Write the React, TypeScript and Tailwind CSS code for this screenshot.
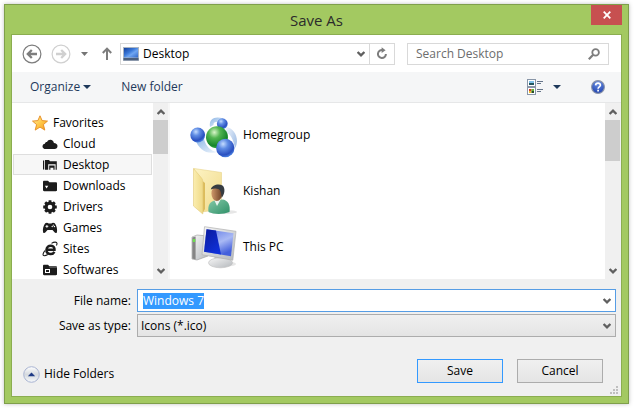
import { useEffect, useRef, type ReactNode } from "react";

function Chevron({ up = false, className = "" }: { up?: boolean; className?: string }) {
  return (
    <svg width="8" height="6" viewBox="0 0 8 6" className={className} aria-hidden="true">
      <path
        d={up ? "M0.6 5 L4 1.7 L7.4 5" : "M0.6 1 L4 4.3 L7.4 1"}
        fill="none"
        stroke="#606060"
        strokeWidth="2.4"
      />
    </svg>
  );
}

function NavCircle({ forward = false }: { forward?: boolean }) {
  return (
    <svg width="20" height="20" viewBox="0 0 20 20" fill="none" stroke={forward ? "#d0d0d0" : "#7d7d7d"} aria-hidden="true">
      <circle cx="10" cy="10" r="8.9" strokeWidth="1.2" />
      <path
        d={forward ? "M5 10H14M10.2 6L14.2 10L10.2 14" : "M15 10H6M9.8 6L5.8 10L9.8 14"}
        strokeWidth="2.3"
      />
    </svg>
  );
}

function Caret({ color, wide = false }: { color: string; wide?: boolean }) {
  return (
    <svg width={wide ? 8 : 7} height="4" viewBox="0 0 8 4" preserveAspectRatio="none" aria-hidden="true">
      <path d="M0 0H8L4 4Z" fill={color} />
    </svg>
  );
}

function MonitorIcon() {
  return (
    <svg width="16" height="14" viewBox="0 0 16 14" aria-hidden="true">
      <defs>
        <linearGradient id="mon" x1="0" y1="0" x2="1" y2="1">
          <stop offset="0" stopColor="#123f9b" />
          <stop offset="0.4" stopColor="#3a78d8" />
          <stop offset="0.6" stopColor="#6fa6f2" />
          <stop offset="1" stopColor="#2f66c8" />
        </linearGradient>
      </defs>
      <rect width="16" height="14" fill="#a9b4c2" />
      <rect x="1" y="1" width="14" height="9.5" fill="url(#mon)" />
      <rect x="0.5" y="11" width="15" height="2.3" fill="#4b5f7c" />
    </svg>
  );
}

function StarIcon() {
  return (
    <svg width="16" height="16" viewBox="0 0 16 16" aria-hidden="true">
      <defs>
        <linearGradient id="star" x1="0" y1="0" x2="1" y2="1">
          <stop offset="0" stopColor="#fff3b0" />
          <stop offset="0.5" stopColor="#ffc94a" />
          <stop offset="1" stopColor="#f59a1c" />
        </linearGradient>
      </defs>
      <path
        d="M8 0.8L10.1 5.6L15.5 6.1L11.4 9.6L12.8 15.1L8 12.1L3.2 15.1L4.6 9.6L0.5 6.1L5.9 5.6Z"
        fill="url(#star)"
        stroke="#e58a1f"
        strokeWidth="0.9"
        strokeLinejoin="round"
      />
    </svg>
  );
}

function DarkIcon({ children }: { children: ReactNode }) {
  return (
    <svg width="16" height="16" viewBox="0 0 16 16" fill="#1c1c1c" aria-hidden="true">
      {children}
    </svg>
  );
}

const cloud = (
  <DarkIcon>
    <path d="M3.8 13C1.7 13 0.5 11.9 0.5 10.4C0.5 9 1.5 8 2.9 7.8C3 6.6 4 5.9 5 6C5.7 4.5 6.8 3.7 8.3 3.7C10.3 3.7 11.7 5 11.9 6.9C14 6.9 15.5 8.2 15.5 10C15.5 11.8 14.3 13 12.5 13Z" />
  </DarkIcon>
);
const desktop = (
  <DarkIcon>
    <path d="M1 3.5H2.2V12.5H1ZM3 3H7L8 4.2H14.8V12.8H13.6V7.2H6.2V12.8H3Z" />
    <path d="M7.2 8.6H12.6V12.8H11.4V10.8H8.4V12.8H7.2Z" />
  </DarkIcon>
);
const downloads = (
  <DarkIcon>
    <path d="M1 4C1 3.2 1.4 2.8 2.2 2.8H6L7.4 4.2H13.8C14.6 4.2 15 4.6 15 5.4V12C15 12.8 14.6 13.2 13.8 13.2H2.2C1.4 13.2 1 12.8 1 12Z" />
    <path d="M2.9 7.8H6.3L4.6 10.6Z" fill="#fff" />
  </DarkIcon>
);
const drivers = (
  <DarkIcon>
    <path d="M8 1.2V14.8M1.2 8H14.8M3.2 3.2L12.8 12.8M12.8 3.2L3.2 12.8" stroke="#1c1c1c" strokeWidth="2.8" />
    <circle cx="8" cy="8" r="5.5" />
    <circle cx="8" cy="8" r="2.3" fill="#fff" />
  </DarkIcon>
);
const games = (
  <DarkIcon>
    <path d="M3.2 3.2C4.4 2.3 6 2.6 6.6 3.4H9.4C10 2.6 11.6 2.3 12.8 3.2C14.6 5.2 15.6 9.6 14.9 12.2C14.5 13.5 13.2 13.3 12.5 12.3L10.5 9.9H5.5L3.5 12.3C2.8 13.3 1.5 13.5 1.1 12.2C0.4 9.6 1.4 5.2 3.2 3.2Z" />
    <path d="M3.5 6.4H6.3M4.9 5V7.8" stroke="#fff" strokeWidth="0.9" />
    <circle cx="10.2" cy="6.5" r="0.7" fill="#fff" />
    <circle cx="12.4" cy="6.5" r="0.7" fill="#fff" />
    <circle cx="11.3" cy="5.2" r="0.6" fill="#fff" />
  </DarkIcon>
);
const sites = (
  <DarkIcon>
    <path d="M12.4 10.8C11.5 12.4 10 13.2 8.2 13C5.7 12.7 4.3 10.9 4.5 8.6C4.7 6.1 6.6 4.5 9 4.7C11.4 4.9 12.7 6.5 12.5 8.8H5.5" fill="none" stroke="#1c1c1c" strokeWidth="2.5" />
    <path d="M9.5 2.4C12 0.8 14.8 0.7 15 2.3C15.1 3 14.8 3.7 14.4 4.4M3 9.5C1 12 0.5 14.1 1.7 14.6C2.7 15 4.4 14.3 5.8 13.5" fill="none" stroke="#1c1c1c" strokeWidth="1.1" />
  </DarkIcon>
);
const softwares = (
  <DarkIcon>
    <path d="M1 4C1 3.2 1.4 2.8 2.2 2.8H6L7.4 4.2H13.8C14.6 4.2 15 4.6 15 5.4V12C15 12.8 14.6 13.2 13.8 13.2H2.2C1.4 13.2 1 12.8 1 12Z" />
    <path d="M7.4 5.5H15" stroke="#777" strokeWidth="0.6" />
    <rect x="3.5" y="7.5" width="4" height="3" fill="none" stroke="#fff" strokeWidth="1" />
  </DarkIcon>
);

function HomegroupIcon() {
  return (
    <svg width="48" height="48" viewBox="0 0 48 48" aria-hidden="true">
      <defs>
        <radialGradient id="blue" cx="0.38" cy="0.28" r="0.75">
          <stop offset="0" stopColor="#c4dcff" />
          <stop offset="0.35" stopColor="#5f8ce4" />
          <stop offset="0.8" stopColor="#2a50c0" />
          <stop offset="1" stopColor="#4e86e4" />
        </radialGradient>
        <radialGradient id="green" cx="0.38" cy="0.28" r="0.75">
          <stop offset="0" stopColor="#d8f5c8" />
          <stop offset="0.35" stopColor="#52b551" />
          <stop offset="0.8" stopColor="#17862c" />
          <stop offset="1" stopColor="#3cae46" />
        </radialGradient>
        <linearGradient id="trail" x1="0" y1="0" x2="1" y2="1">
          <stop offset="0" stopColor="#8db6e6" />
          <stop offset="1" stopColor="#eef5fc" />
        </linearGradient>
        <linearGradient id="trail2" x1="0" y1="0" x2="1" y2="0.6">
          <stop offset="0" stopColor="#f4f8fd" />
          <stop offset="1" stopColor="#a9c4e8" />
        </linearGradient>
      </defs>
      <path d="M5 28C9 39 17 44 27 41C21 40 16 36 14 28Z" fill="url(#trail)" />
      <path d="M36 16C45 17 50 29 45 37C43 28 41 23 35 21Z" fill="url(#trail2)" />
      <path d="M33 7.5C26 5 18.5 7 20 16L23.5 14C23 10.5 28 10 33 12Z" fill="url(#trail)" />
      <circle cx="32.3" cy="12.7" r="5.4" fill="url(#blue)" />
      <circle cx="7.7" cy="24" r="7.4" fill="url(#blue)" />
      <circle cx="27" cy="26.2" r="11" fill="url(#green)" />
      <circle cx="35.3" cy="37" r="9.2" fill="url(#blue)" />
    </svg>
  );
}

function UserFolderIcon() {
  return (
    <svg width="48" height="48" viewBox="0 0 48 48" aria-hidden="true">
      <defs>
        <linearGradient id="fold" x1="0" y1="0" x2="1" y2="0">
          <stop offset="0" stopColor="#fbeeb0" />
          <stop offset="1" stopColor="#efd986" />
        </linearGradient>
        <linearGradient id="back" x1="0" y1="0" x2="1" y2="1">
          <stop offset="0" stopColor="#fdf3c4" />
          <stop offset="1" stopColor="#f0da8a" />
        </linearGradient>
        <linearGradient id="shirt" x1="0" y1="0" x2="1" y2="1">
          <stop offset="0" stopColor="#84c9a8" />
          <stop offset="1" stopColor="#2f9068" />
        </linearGradient>
        <linearGradient id="face" x1="0" y1="0" x2="1" y2="0">
          <stop offset="0" stopColor="#d0986a" />
          <stop offset="1" stopColor="#6b3f25" />
        </linearGradient>
      </defs>
      <ellipse cx="33" cy="45" rx="14" ry="2" fill="#e6e6e6" />
      <path d="M4 1.5L31.5 5.5V42L12 45Z" fill="url(#back)" stroke="#e8d48a" strokeWidth="0.6" />
      <path d="M12.5 14L15 16V42L12.5 46Z" fill="#dcbc5c" />
      <path d="M3.5 1.5L11.5 11C12.5 12.3 12.8 13.5 12.8 15V47L3.5 39Z" fill="url(#fold)" stroke="#e3ca78" strokeWidth="0.6" />
      <path d="M18.5 45C17.5 38 20 34.5 25 33.5L33 32.5C38 33.5 40.5 38 39.5 45C33 47.6 24 47.6 18.5 45Z" fill="url(#shirt)" />
      <path d="M24 32.5L27 39L31.5 31Z" fill="#eaf3ee" />
      <ellipse cx="26.8" cy="26.5" rx="5.4" ry="7.4" fill="url(#face)" />
      <path d="M20.8 22.5C22 17.5 29 16.5 32.5 18.5C35.5 21 35 27 31.5 31C31.5 27 31 24 29 22.3C26 21 23.5 21.3 20.8 22.5Z" fill="#363c42" />
    </svg>
  );
}

function ComputerIcon() {
  return (
    <svg width="48" height="48" viewBox="0 0 48 48" aria-hidden="true">
      <defs>
        <linearGradient id="screenDark" x1="0" y1="0" x2="0.6" y2="1">
          <stop offset="0" stopColor="#0a1a9c" />
          <stop offset="1" stopColor="#1030d8" />
        </linearGradient>
        <linearGradient id="screenLight" x1="0" y1="0" x2="0.5" y2="1">
          <stop offset="0" stopColor="#5a74e4" />
          <stop offset="0.6" stopColor="#a9b9f4" />
          <stop offset="1" stopColor="#4460dc" />
        </linearGradient>
        <linearGradient id="metal" x1="0" y1="0" x2="1" y2="1">
          <stop offset="0" stopColor="#f7f7f7" />
          <stop offset="1" stopColor="#b4b8bc" />
        </linearGradient>
      </defs>
      <path d="M2 14L7 12L18 13V33L7 37L2 36Z" fill="url(#metal)" stroke="#9b9b9b" strokeWidth="0.6" />
      <path d="M2.3 14.4L5.6 13.6V36.4L2.3 35.6Z" fill="#858585" />
      <rect x="2.8" y="16" width="2.4" height="3" fill="#6be04c" />
      <ellipse cx="37" cy="41" rx="9" ry="2.5" fill="#e6e6e6" />
      <path d="M24 33L34 35L35 40H26Z" fill="#c3c6c9" />
      <ellipse cx="30.5" cy="39.8" rx="12" ry="5" fill="url(#metal)" stroke="#bdbdbd" strokeWidth="0.6" />
      <path d="M14.5 3.7L46 8.3L42.8 37.2L12 31.7Z" fill="url(#metal)" stroke="#b0b0b0" strokeWidth="0.7" />
      <path d="M16.5 6.2L43.5 10.2L41 33.2L14 28.8Z" fill="url(#screenLight)" />
      <path d="M16.5 6.2L26 7.6L31 31.6L14 28.8Z" fill="url(#screenDark)" />
    </svg>
  );
}

function ViewIcon() {
  return (
    <svg width="17" height="16" viewBox="0 0 17 16" aria-hidden="true">
      <rect x="0.5" y="0.5" width="8" height="7" fill="#fff" stroke="#8996a8" />
      <rect x="2" y="2" width="5" height="2" fill="#7fc1e8" />
      <rect x="2" y="4" width="5" height="2" fill="#23565e" />
      <rect x="0.5" y="8.5" width="8" height="7" fill="#fff" stroke="#8996a8" />
      <rect x="2" y="10" width="2.5" height="2" fill="#d83b2a" />
      <rect x="4.5" y="10" width="2.5" height="2" fill="#62b531" />
      <rect x="2" y="12" width="2.5" height="2" fill="#edc02d" />
      <rect x="4.5" y="12" width="2.5" height="2" fill="#254f2c" />
      <path d="M10 2.5H16M10 4.5H14M10 10.5H16M10 12.5H14" stroke="#66758a" />
    </svg>
  );
}

function HelpIcon() {
  return (
    <svg width="14" height="14" viewBox="0 0 14 14" aria-hidden="true">
      <defs>
        <radialGradient id="help" cx="0.5" cy="0.2" r="0.9">
          <stop offset="0" stopColor="#6e94e6" />
          <stop offset="1" stopColor="#1538a8" />
        </radialGradient>
      </defs>
      <circle cx="7" cy="7" r="6.4" fill="url(#help)" stroke="#8b94a8" strokeWidth="1.1" />
      <path d="M4.6 5.4C4.7 2.5 9.6 2.5 9.4 5.3C9.3 6.9 7.1 6.8 7.1 8.7M7.1 9.7V11.4" fill="none" stroke="#fff" strokeWidth="1.7" />
    </svg>
  );
}

const favorites = [
  { name: "Cloud", icon: cloud },
  { name: "Desktop", icon: desktop, selected: true },
  { name: "Downloads", icon: downloads },
  { name: "Drivers", icon: drivers },
  { name: "Games", icon: games },
  { name: "Sites", icon: sites },
  { name: "Softwares", icon: softwares },
];

const files = [
  { name: "Homegroup", icon: <HomegroupIcon /> },
  { name: "Kishan", icon: <UserFolderIcon /> },
  { name: "This PC", icon: <ComputerIcon /> },
];

function ScrollBar({ label, tall = false }: { label: string; tall?: boolean }) {
  return (
    <div className="flex w-[15px] shrink-0 flex-col bg-[#f0f0f0]">
      <button type="button" aria-label={`Scroll ${label} up`} className="flex h-[17px] items-center justify-center">
        <Chevron up />
      </button>
      <div className={tall ? "h-[41px] bg-[#cdcdcd]" : "h-[34px] bg-[#cdcdcd]"} />
      <button type="button" aria-label={`Scroll ${label} down`} className="mt-auto flex h-[17px] items-center justify-center">
        <Chevron />
      </button>
    </div>
  );
}

export default function App() {
  const nameRef = useRef<HTMLInputElement>(null);

  useEffect(() => {
    nameRef.current?.focus();
    nameRef.current?.select();
  }, []);

  return (
    <main className="bg-white py-1 pr-[5px] pl-1 font-['Open_Sans',sans-serif] text-xs text-black">
      <div className="border border-[#7f9f4b] bg-[#a3c961] px-1.5 pb-1.5 shadow-[0_0_4px_rgba(0,0,0,0.25)]">
        <header className="relative flex h-[29px] items-center justify-center">
          <h1 className="text-[15px] text-[#2b2b2b]">Save As</h1>
          <button
            type="button"
            aria-label="Close"
            className="absolute top-0 right-0 flex h-5 w-[31px] items-center justify-center bg-[#c75050]"
          >
            <svg width="8" height="8" viewBox="0 0 8 8" aria-hidden="true">
              <path d="M0.7 0.7L7.3 7.3M7.3 0.7L0.7 7.3" stroke="#fff" strokeWidth="1.8" />
            </svg>
          </button>
        </header>

        <div className="border border-[#8bad50] bg-white">
          <nav className="flex h-[37px] items-center pr-3 pl-[10px]">
            <button type="button" aria-label="Back"><NavCircle /></button>
            <button type="button" aria-label="Forward" className="ml-[9px]"><NavCircle forward /></button>
            <button type="button" aria-label="Recent locations" className="ml-[10px] flex h-5 items-center">
              <Caret color="#757575" />
            </button>
            <button type="button" aria-label="Up" className="ml-[14px] flex h-5 items-center">
              <svg width="10" height="13" viewBox="0 0 10 13" fill="none" stroke="#7d7d7d" strokeWidth="2" aria-hidden="true">
                <path d="M5 13V1.5M0.8 6L5 1.6L9.2 6" />
              </svg>
            </button>
            <div className="ml-2 flex h-[22px] flex-1 items-stretch border border-[#d9d9d9]">
              <button type="button" className="flex flex-1 items-center gap-1 pr-1 pl-0.5">
                <MonitorIcon />
                <span>Desktop</span>
                <Chevron className="ml-auto" />
              </button>
              <button type="button" aria-label="Refresh" className="flex w-[25px] items-center justify-center border-l border-[#d9d9d9]">
                <svg width="12" height="13" viewBox="0 0 12 13" aria-hidden="true">
                  <path d="M7 3.2A4 4 0 1 0 9.9 7" fill="none" stroke="#7d7d7d" strokeWidth="2" />
                  <path d="M5.6 0.2L9.6 3.2L5.6 6Z" fill="#7d7d7d" />
                </svg>
              </button>
            </div>
            <div className="ml-3 flex h-[22px] w-[202px] items-center border border-[#d9d9d9] px-2">
              <input
                type="search"
                aria-label="Search Desktop"
                placeholder="Search Desktop"
                className="min-w-0 flex-1 outline-none placeholder:text-[#6d6d6d]"
              />
              <svg width="12" height="12" viewBox="0 0 12 12" fill="none" stroke="#7d7d7d" aria-hidden="true">
                <circle cx="7.6" cy="4.4" r="3.3" strokeWidth="1.8" />
                <path d="M5.2 6.8L0.8 11.2" strokeWidth="2.2" />
              </svg>
            </div>
          </nav>

          <div className="flex h-[31px] items-center border-b border-[#e6e7e8] bg-[#f5f6f7] pr-4 pl-[18px] text-[#1e395b]">
            <button type="button" className="flex items-center gap-[3px]">
              Organize
              <Caret color="#1e395b" wide />
            </button>
            <button type="button" className="ml-[30px]">New folder</button>
            <button type="button" aria-label="Change view" className="ml-auto"><ViewIcon /></button>
            <button type="button" aria-label="More views" className="ml-[9px] flex h-5 items-center">
              <Caret color="#1e395b" wide />
            </button>
            <button type="button" aria-label="Help" className="ml-[30px]"><HelpIcon /></button>
          </div>

          <div className="flex h-44">
            <aside className="flex w-[156px] shrink-0">
              <div className="min-w-0 flex-1 overflow-hidden pt-[9px] pr-px pl-px">
                <div className="flex h-[21px] items-center gap-[5px] pl-[19px]">
                  <StarIcon />
                  Favorites
                </div>
                <ul>
                  {favorites.map((f) => (
                    <li
                      key={f.name}
                      className={
                        f.selected
                          ? "flex h-[21px] items-center gap-[5px] border border-[#dedede] bg-[#f7f7f7] pl-[28px]"
                          : "flex h-[21px] items-center gap-[5px] border border-transparent pl-[28px]"
                      }
                    >
                      {f.icon}
                      {f.name}
                    </li>
                  ))}
                </ul>
              </div>
              <ScrollBar label="folders" />
            </aside>
            <ul className="min-w-0 flex-1 border-l-2 border-[#f7f7f7] pt-1 pl-[20px]">
              {files.map((f) => (
                <li key={f.name} className="flex h-14 items-center gap-[5px]">
                  {f.icon}
                  {f.name}
                </li>
              ))}
            </ul>
            <ScrollBar label="files" tall />
            <div className="w-px bg-[#f0f0f0]" />
          </div>

          <form className="bg-[#f0f0f0] pt-2.5" onSubmit={(e) => e.preventDefault()}>
            <div className="grid grid-cols-[119px_1fr] items-center gap-x-1.5 gap-y-0.5 pr-[5px]">
              <label htmlFor="file-name" className="text-right">File name:</label>
              <div className="flex h-[23px] items-center border border-[#569de5] bg-white pr-1 pl-[5px]">
                <input
                  id="file-name"
                  ref={nameRef}
                  defaultValue="Windows 7"
                  className="min-w-0 flex-1 outline-none selection:bg-[#3399ff] selection:text-white"
                />
                <button type="button" aria-label="Previous names"><Chevron /></button>
              </div>
              <label htmlFor="file-type" className="text-right">Save as type:</label>
              <div className="grid h-[23px] items-center border border-[#acacac] bg-linear-to-b from-[#f0f0f0] to-[#e4e4e4]">
                <select id="file-type" className="col-start-1 row-start-1 w-full appearance-none pl-[3px] outline-none">
                  <option>Icons (*.ico)</option>
                </select>
                <Chevron className="pointer-events-none col-start-1 row-start-1 mr-1 justify-self-end" />
              </div>
            </div>

            <footer className="mt-[22px] flex items-center pr-[18px] pl-[11px]">
              <button type="button" className="flex items-center gap-1 pt-1.5">
                <svg width="17" height="17" viewBox="0 0 17 17" aria-hidden="true">
                  <defs>
                    <linearGradient id="knob" x1="0" y1="0" x2="0" y2="1">
                      <stop offset="0" stopColor="#ffffff" />
                      <stop offset="0.5" stopColor="#d5d9de" />
                      <stop offset="1" stopColor="#f7fafc" />
                    </linearGradient>
                  </defs>
                  <circle cx="8.5" cy="8.5" r="7.8" fill="url(#knob)" stroke="#a9b4d2" />
                  <path d="M4.8 10.2L8.5 6.5L12.2 10.2Z" fill="#1f3b86" />
                </svg>
                Hide Folders
              </button>
              <button type="submit" className="ml-auto h-6 w-[86px] border border-[#3399ff] bg-linear-to-b from-[#f0f0f0] to-[#e5e5e5]">
                Save
              </button>
              <button type="button" className="ml-3.5 h-6 w-[86px] border border-[#acacac] bg-linear-to-b from-[#f0f0f0] to-[#e5e5e5]">
                Cancel
              </button>
            </footer>
            <div className="flex h-[13px] items-end justify-end pr-[3px] pb-0.5">
              <svg width="8" height="8" viewBox="0 0 8 8" fill="#bfbfbf" aria-hidden="true">
                <path d="M6 0H8V2H6ZM3 3H5V5H3ZM6 3H8V5H6ZM0 6H2V8H0ZM3 6H5V8H3ZM6 6H8V8H6Z" />
              </svg>
            </div>
          </form>
        </div>
      </div>
    </main>
  );
}
